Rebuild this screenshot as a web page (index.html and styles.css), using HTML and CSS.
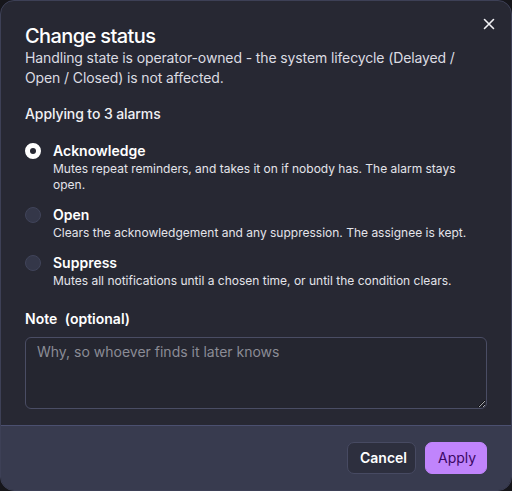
FILE: index.html
```html
<!DOCTYPE html>
<html lang="en">
<head>
<meta charset="utf-8">
<title>Change status</title>
<link rel="stylesheet" href="styles.css">
</head>
<body>
<div class="dialog">
  <div class="body">
    <button class="close" aria-label="Close">
      <svg width="12" height="12" viewBox="0 0 12 12"><path d="M1.5 1.5 L10.5 10.5 M10.5 1.5 L1.5 10.5" stroke="#f2f2f5" stroke-width="1.6" stroke-linecap="round"/></svg>
    </button>
    <h2 class="title">Change status</h2>
    <p class="desc">Handling state is operator-owned - the system lifecycle (Delayed / Open / Closed) is not affected.</p>
    <p class="applying">Applying to 3 alarms</p>
    <div class="options">
      <label class="option">
        <span class="radio checked"></span>
        <span class="opt-text">
          <span class="opt-label">Acknowledge</span>
          <span class="opt-desc">Mutes repeat reminders, and takes it on if nobody has. The alarm stays open.</span>
        </span>
      </label>
      <label class="option">
        <span class="radio"></span>
        <span class="opt-text">
          <span class="opt-label">Open</span>
          <span class="opt-desc">Clears the acknowledgement and any suppression. The assignee is kept.</span>
        </span>
      </label>
      <label class="option">
        <span class="radio"></span>
        <span class="opt-text">
          <span class="opt-label">Suppress</span>
          <span class="opt-desc">Mutes all notifications until a chosen time, or until the condition clears.</span>
        </span>
      </label>
    </div>
    <div class="note-label">Note <span class="opt">(optional)</span></div>
    <textarea class="note" placeholder="Why, so whoever finds it later knows"></textarea>
  </div>
  <div class="footer">
    <button class="btn cancel">Cancel</button>
    <button class="btn apply">Apply</button>
  </div>
</div>
</body>
</html>
```
FILE: styles.css
```css
html, body {
  margin: 0;
  padding: 0;
  background: #16161b;
}
body {
  font-family: Inter, "Noto Sans", "Liberation Sans", sans-serif;
  color: #f2f2f5;
}
.dialog {
  width: 512px;
  height: 491px;
  box-sizing: border-box;
  border: 1px solid #3d4056;
  border-radius: 14px;
  background: #272833;
  display: flex;
  flex-direction: column;
  overflow: hidden;
}
.body {
  position: relative;
  padding: 23px 24px 16px;
  flex: 1;
  display: flex;
  flex-direction: column;
}
.close {
  position: absolute;
  top: 14px;
  right: 13px;
  width: 18px;
  height: 18px;
  padding: 0;
  border: 0;
  background: transparent;
  display: flex;
  align-items: center;
  justify-content: center;
}
.title {
  margin: 0;
  font-size: 20px;
  line-height: 24px;
  font-weight: 500;
  letter-spacing: -0.6px;
  color: #ffffff;
}
.desc {
  margin: 0;
  font-size: 14px;
  line-height: 20px;
  letter-spacing: -0.12px;
  color: #dcdce2;
}
.applying {
  margin: 16px 0 0;
  font-size: 14px;
  line-height: 20px;
  font-weight: 500;
  letter-spacing: -0.1px;
  color: #f0f0f3;
}
.options {
  margin-top: 17px;
  display: flex;
  flex-direction: column;
  gap: 12px;
}
.option {
  display: flex;
  gap: 12px;
  align-items: flex-start;
}
.radio {
  flex: none;
  width: 16px;
  height: 16px;
  margin-top: 2px;
  box-sizing: border-box;
  border-radius: 50%;
  background: #343749;
  border: 1px solid #40445a;
}
.radio.checked {
  background: #ffffff;
  border: 5px solid #ffffff;
  position: relative;
}
.radio.checked::after {
  content: "";
  position: absolute;
  left: 0;
  top: 0;
  width: 6px;
  height: 6px;
  border-radius: 50%;
  background: #272833;
}
.opt-text {
  display: flex;
  flex-direction: column;
}
.opt-label {
  font-size: 14px;
  line-height: 20px;
  font-weight: 600;
  color: #ffffff;
}
.opt-desc {
  font-size: 12px;
  line-height: 16px;
  color: #e4e4ea;
}
.note-label {
  margin-top: 20px;
  font-size: 14px;
  line-height: 20px;
  font-weight: 600;
  color: #ffffff;
}
.note-label .opt {
  margin-left: 4px;
}
.note {
  margin-top: 8px;
  height: 72px;
  box-sizing: border-box;
  width: 100%;
  padding: 4px 11px;
  border: 1px solid #4a4d64;
  border-radius: 6px;
  background: #252630;
  color: #f0f0f3;
  font-family: inherit;
  font-size: 14px;
  line-height: 20px;
  resize: vertical;
  outline: none;
}
.note::placeholder {
  color: #8b8c96;
}
.footer {
  flex: none;
  height: 65px;
  box-sizing: border-box;
  border-top: 1px solid #4b5070;
  background: #383b4f;
  display: flex;
  justify-content: flex-end;
  align-items: flex-start;
  gap: 9px;
  padding: 16px 24px 0;
}
.btn {
  height: 32px;
  border-radius: 7px;
  font-family: inherit;
  font-size: 14px;
  line-height: 20px;
  padding: 0 12px;
  box-sizing: border-box;
}
.cancel {
  width: 69px;
  background: #2d2f3e;
  border: 1px solid #474a62;
  color: #ffffff;
  font-weight: 600;
}
.apply {
  width: 62px;
  background: #c084fc;
  border: 1px solid #c084fc;
  color: #3b0764;
  font-weight: 400;
}
```
